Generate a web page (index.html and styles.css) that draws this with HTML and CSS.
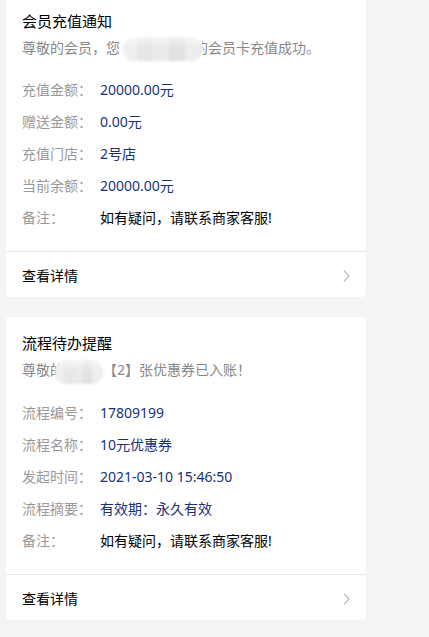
FILE: index.html
```html
<!DOCTYPE html>
<html lang="zh-CN">
<head>
<meta charset="utf-8">
<title>消息通知</title>
<link rel="stylesheet" href="styles.css">
</head>
<body>
<div class="list">
  <div class="card">
    <div class="card-body">
      <div class="title">会员充值通知</div>
      <div class="desc">尊敬的会员，您<span class="mask mask-1"></span>的会员卡充值成功。</div>
      <div class="row"><span class="label">充值金额：</span><span class="value">20000.00元</span></div>
      <div class="row"><span class="label">赠送金额：</span><span class="value">0.00元</span></div>
      <div class="row"><span class="label">充值门店：</span><span class="value">2号店</span></div>
      <div class="row"><span class="label">当前余额：</span><span class="value">20000.00元</span></div>
      <div class="row"><span class="label">备注：</span><span class="value plain">如有疑问，请联系商家客服!</span></div>
    </div>
    <div class="footer">
      <span>查看详情</span>
      <svg class="chev" width="8" height="12" viewBox="0 0 8 12"><path d="M1.8 0.6 L7 6 L1.8 11.4" fill="none" stroke="#b8b8b8" stroke-width="1.3"/></svg>
    </div>
  </div>
  <div class="card">
    <div class="card-body">
      <div class="title">流程待办提醒</div>
      <div class="desc">尊敬的<span class="mask mask-2"></span>【2】张优惠券已入账！</div>
      <div class="row"><span class="label">流程编号：</span><span class="value">17809199</span></div>
      <div class="row"><span class="label">流程名称：</span><span class="value">10元优惠券</span></div>
      <div class="row"><span class="label">发起时间：</span><span class="value">2021-03-10 15:46:50</span></div>
      <div class="row"><span class="label">流程摘要：</span><span class="value">有效期：永久有效</span></div>
      <div class="row"><span class="label">备注：</span><span class="value plain">如有疑问，请联系商家客服!</span></div>
    </div>
    <div class="footer">
      <span>查看详情</span>
      <svg class="chev" width="8" height="12" viewBox="0 0 8 12"><path d="M1.8 0.6 L7 6 L1.8 11.4" fill="none" stroke="#b8b8b8" stroke-width="1.3"/></svg>
    </div>
  </div>
</div>
</body>
</html>
```

FILE: styles.css
```css
html, body {
  margin: 0;
  padding: 0;
  background: #f4f4f4;
}
body {
  font-family: "Noto Sans", "Noto Sans CJK SC", sans-serif;
  font-size: 14px;
  color: #000;
}
.list {
  width: 360px;
  margin-left: 6px;
  margin-top: -5px;
}
.card {
  background: #fff;
  border-radius: 4px;
  margin-bottom: 20px;
}
.card-body {
  padding: 15px 16px 17px;
}
.title {
  font-size: 15px;
  line-height: 22px;
  color: #000;
  margin-bottom: 5px;
}
.desc {
  font-size: 14px;
  line-height: 22px;
  color: #888;
  margin-bottom: 15px;
  white-space: nowrap;
}
.mask {
  position: relative;
  z-index: 1;
  display: inline-block;
  height: 24px;
  margin-top: -2px;
  margin-bottom: -2px;
  vertical-align: middle;
  border-radius: 11px;
  background:
    linear-gradient(180deg, rgba(255,255,255,0.6), rgba(255,255,255,0) 45%),
    linear-gradient(90deg, #efefef 0 18%, #e6e6e6 18% 38%, #eaeaea 38% 58%, #e1e1e1 58% 78%, #ededed 78% 100%);
  filter: blur(1px);
}
.mask-1 {
  width: 80px;
  margin-left: 3px;
  margin-right: -9px;
}
.mask-2 {
  width: 48px;
  margin-left: -9px;
}
.row {
  display: flex;
  font-size: 14px;
  line-height: 32px;
}
.label {
  width: 78px;
  flex-shrink: 0;
  color: #999;
}
.value {
  color: #173177;
}
.value.plain {
  color: #000;
}
.footer {
  border-top: 1px solid #e8e8e8;
  display: flex;
  justify-content: space-between;
  align-items: center;
  padding: 14px 16px 11px;
  line-height: 20px;
  font-size: 14px;
  color: #000;
}
.chev {
  display: block;
}
```
